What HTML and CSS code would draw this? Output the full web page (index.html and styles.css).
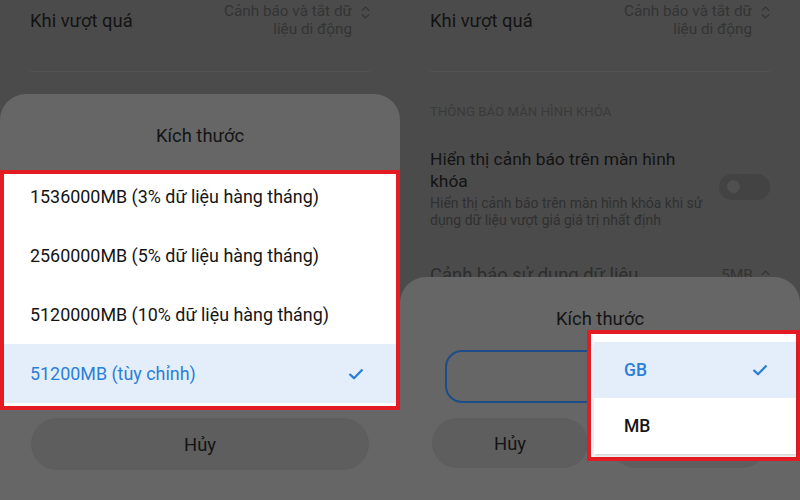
FILE: index.html
```html
<!DOCTYPE html>
<html lang="vi">
<head>
<meta charset="utf-8">
<title>Kích thước</title>
<link rel="stylesheet" href="styles.css">
</head>
<body>
<div class="screen">
  <section class="phone">
    <div class="settings">
      <div class="row-top">
        <span class="label">Khi vượt quá</span>
        <span class="value">
          <span class="value-text">Cảnh báo và tắt dữ<br>liệu di động</span>
          <svg class="updown" viewBox="0 0 10 16" width="9" height="15"><path d="M1 6 L5 2 L9 6 M1 10 L5 14 L9 10" fill="none" stroke="#333" stroke-width="1.3"/></svg>
        </span>
      </div>
      <div class="divider"></div>
    </div>
    <div class="sheet sheet-left">
      <div class="sheet-title">Kích thước</div>
      <div class="mark-box list-box">
        <div class="list-inner">
          <div class="option option-first">1536000MB (3% dữ liệu hàng tháng)</div>
          <div class="option">2560000MB (5% dữ liệu hàng tháng)</div>
          <div class="option">5120000MB (10% dữ liệu hàng tháng)</div>
          <div class="option option-selected"><span>51200MB (tùy chỉnh)</span>
            <svg class="check" viewBox="0 0 16 12" width="16" height="12"><path d="M1.5 6 L6 10.2 L14.5 1.5" fill="none" stroke="#2b7fd6" stroke-width="2.3" stroke-linejoin="round"/></svg>
          </div>
        </div>
      </div>
      <div class="btn btn-wide">Hủy</div>
    </div>
  </section>

  <section class="phone">
    <div class="settings">
      <div class="row-top">
        <span class="label">Khi vượt quá</span>
        <span class="value">
          <span class="value-text">Cảnh báo và tắt dữ<br>liệu di động</span>
          <svg class="updown" viewBox="0 0 10 16" width="9" height="15"><path d="M1 6 L5 2 L9 6 M1 10 L5 14 L9 10" fill="none" stroke="#333" stroke-width="1.3"/></svg>
        </span>
      </div>
      <div class="divider"></div>
      <div class="section-head">THÔNG BÁO MÀN HÌNH KHÓA</div>
      <div class="row-toggle">
        <div class="toggle-text">
          <div class="label-big">Hiển thị cảnh báo trên màn hình<br>khóa</div>
          <div class="sub">Hiển thị cảnh báo trên màn hình khóa khi sử<br>dụng dữ liệu vượt giá giá trị nhất định</div>
        </div>
        <div class="toggle"><span class="knob"></span></div>
      </div>
      <div class="row-usage">
        <span class="label-dim">Cảnh báo sử dụng dữ liệu</span>
        <span class="value-small">5MB
          <svg class="updown" viewBox="0 0 10 16" width="9" height="15"><path d="M1 6 L5 2 L9 6 M1 10 L5 14 L9 10" fill="none" stroke="#333" stroke-width="1.3"/></svg>
        </span>
      </div>
    </div>
    <div class="sheet sheet-right">
      <div class="sheet-title">Kích thước</div>
      <div class="input-box"></div>
      <div class="btn-row">
        <div class="btn btn-half">Hủy</div>
        <div class="btn btn-half"></div>
      </div>
      <div class="mark-box unit-box">
        <div class="unit-menu">
          <div class="unit unit-selected"><span>GB</span>
            <svg class="check" viewBox="0 0 16 12" width="16" height="12"><path d="M1.5 6 L6 10.2 L14.5 1.5" fill="none" stroke="#2b7fd6" stroke-width="2.3" stroke-linejoin="round"/></svg>
          </div>
          <div class="unit">MB</div>
        </div>
      </div>
    </div>
  </section>
</div>
</body>
</html>
```

FILE: styles.css
```css
* { box-sizing: border-box; margin: 0; padding: 0; }

html, body {
  width: 800px;
  height: 500px;
  overflow: hidden;
  background: #4b4b4b;
  font-family: Roboto, "Noto Sans", "Liberation Sans", sans-serif;
}

.screen {
  display: flex;
  width: 800px;
  height: 500px;
}

.phone {
  position: relative;
  width: 400px;
  height: 500px;
  overflow: hidden;
  background: #4b4b4b;
}

.settings {
  padding: 2px 30px 0 30px;
}

.row-top {
  display: flex;
  justify-content: space-between;
  align-items: center;
}

.label {
  font-size: 18.4px;
  color: #131313;
}

.value {
  display: flex;
  align-items: flex-start;
  gap: 9px;
}

.value-text {
  font-size: 15.3px;
  line-height: 18px;
  color: #343434;
  text-align: right;
}

.updown {
  margin-top: 3px;
  display: block;
}

.divider {
  margin-top: 33px;
  height: 1px;
  background: #525252;
}

.section-head {
  margin-top: 32px;
  font-size: 13.1px;
  line-height: 16px;
  color: #3a3a3a;
  letter-spacing: 0.1px;
}

.row-toggle {
  margin-top: 28px;
  display: flex;
  justify-content: space-between;
  align-items: center;
}

.label-big {
  font-size: 17.4px;
  line-height: 22px;
  color: #131313;
}

.sub {
  margin-top: 3px;
  font-size: 14px;
  line-height: 17px;
  color: #303030;
}

.toggle {
  width: 51px;
  height: 26px;
  border-radius: 13px;
  background: #434343;
  display: flex;
  align-items: center;
  padding-left: 8px;
  margin-top: -4px;
}

.knob {
  width: 13px;
  height: 13px;
  border-radius: 50%;
  background: #505050;
}

.row-usage {
  margin-top: 35px;
  display: flex;
  justify-content: space-between;
  align-items: center;
  font-size: 18.4px;
  line-height: 22px;
}

.label-dim { color: #2e2e2e; }

.value-small {
  display: flex;
  align-items: center;
  gap: 8px;
  font-size: 15.5px;
  color: #333;
}

/* bottom sheet, laid over the settings list */
.sheet {
  position: absolute;
  left: 0;
  right: 0;
  bottom: 0;
  background: #666666;
  border-radius: 26px 26px 0 0;
  padding-top: 30px;
}

.sheet-left { top: 94px; }
.sheet-right { top: 277px; }

.sheet-title {
  text-align: center;
  font-size: 18.4px;
  line-height: 24px;
  color: #141414;
}

.mark-box {
  border: 4px solid #e31b23;
  background: #ffffff;
}

.list-box {
  margin-top: 22px;
  height: 240px;
  overflow: hidden;
  padding-bottom: 3px;
}

.list-inner {
  height: 233px;
  overflow: hidden;
}

.option {
  height: 59px;
  display: flex;
  align-items: center;
  justify-content: space-between;
  padding: 0 32px 0 26px;
  font-size: 17.9px;
  color: #141414;
}

.option-first {
  height: 52px;
  padding-bottom: 7px;
}

.option-selected {
  background: #e4eefa;
  color: #2b7fd6;
}

.check { display: block; }

.btn {
  height: 52px;
  border-radius: 26px;
  background: #5e5e5e;
  display: flex;
  align-items: center;
  justify-content: center;
  font-size: 18.4px;
  color: #141414;
}

.btn-wide {
  margin: 8px 31px 0 31px;
}

.input-box {
  margin: 19px 45px 0 45px;
  height: 53px;
  border: 2px solid #1d4d88;
  border-radius: 17px;
}

.btn-row {
  margin: 15px 33px 0 32px;
  display: flex;
  gap: 23px;
}

.btn-half {
  flex: 1;
  height: 50px;
  border-radius: 25px;
}

/* unit dropdown lies over the sheet */
.unit-box {
  position: absolute;
  left: 187px;
  top: 53px;
  width: 213px;
  height: 131px;
  padding: 8px 0 0 3px;
}

.unit-menu {
  background: #ffffff;
  box-shadow: 0 2px 3px rgba(0, 0, 0, 0.18);
}

.unit {
  height: 56px;
  display: flex;
  align-items: center;
  justify-content: space-between;
  padding: 0 28px 0 30px;
  font-size: 17.5px;
  font-weight: 500;
  color: #141414;
}

.unit-selected {
  background: #e4eefa;
  color: #2b7fd6;
}
```
